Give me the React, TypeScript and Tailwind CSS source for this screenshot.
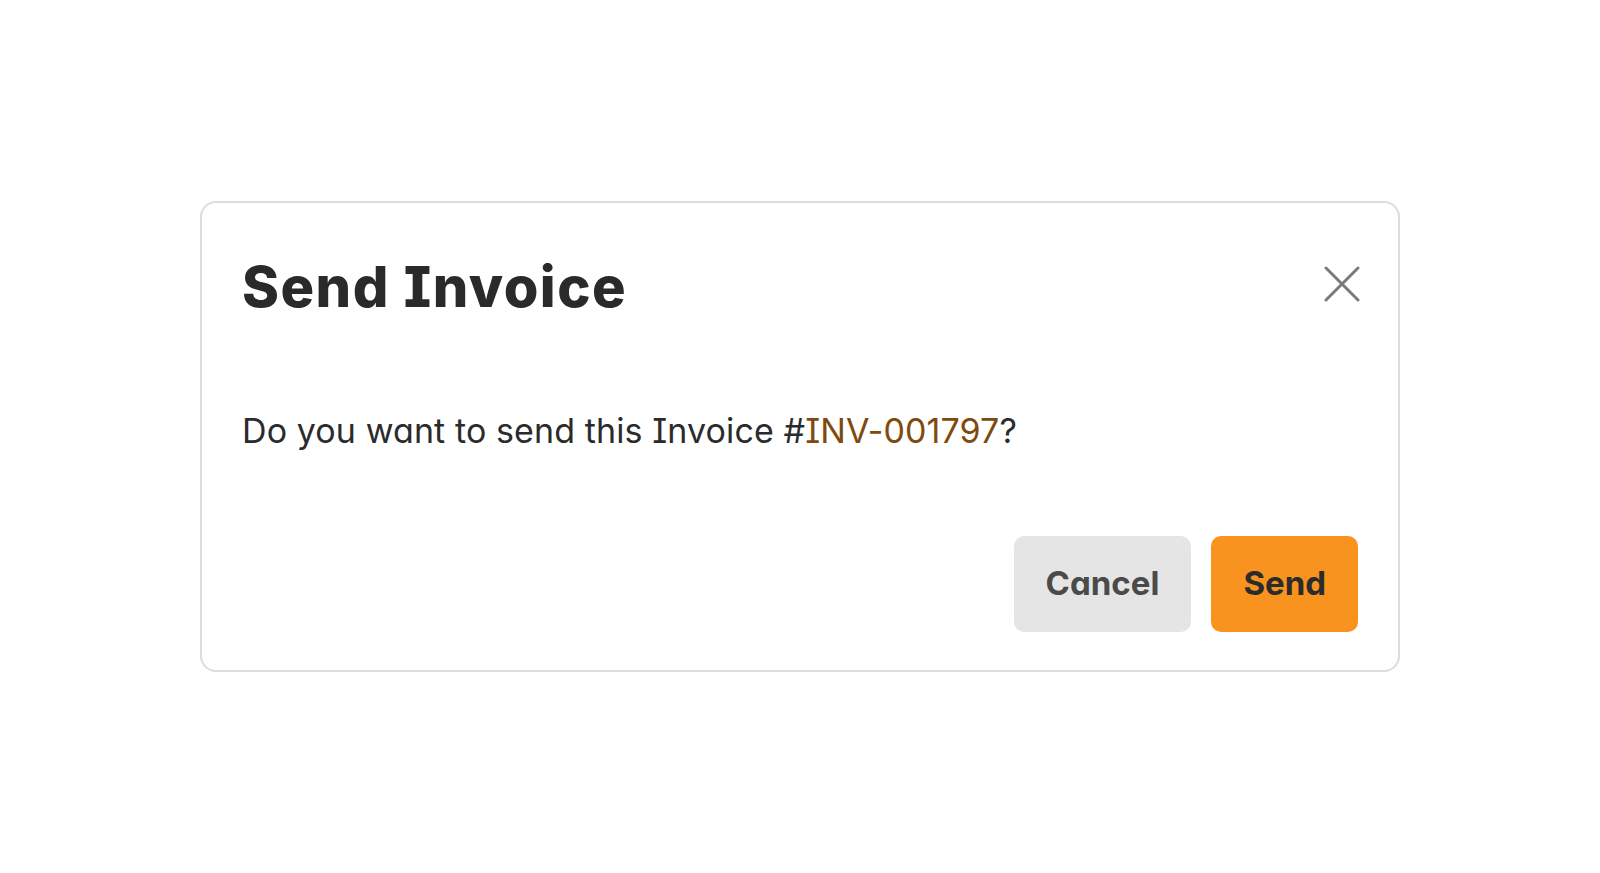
import { useState } from "react";

export default function App() {
  const [open, setOpen] = useState(true);
  const invoiceNo = "INV-001797";

  return (
    <div
      className="min-h-screen w-full bg-white flex items-center justify-center [font-feature-settings:'cv08','cv11']"
      style={{ fontFamily: "Inter, 'Noto Sans', sans-serif" }}
    >
      {open && (
        <div className="w-[1200px] rounded-[16px] border-2 border-[#dcdcdc] bg-white px-10 pt-10 pb-[38px] flex flex-col">
          <div className="flex items-start justify-between">
            <h2 className="text-[56px] leading-[88px] font-extrabold tracking-[1.5px] text-[#2a2a2a]">
              Send Invoice
            </h2>
            <button
              onClick={() => setOpen(false)}
              className="mt-[23px] -mr-[2px] text-[#7a7a7a]"
              aria-label="Close"
            >
              <svg width="36" height="36" viewBox="0 0 36 36" fill="none">
                <path
                  d="M2 2L34 34M34 2L2 34"
                  stroke="currentColor"
                  strokeWidth="3"
                  strokeLinecap="round"
                />
              </svg>
            </button>
          </div>

          <p className="mt-[80px] text-[34px] leading-[40px] tracking-[0.1px] text-[#2b2b2b]">
            Do you want to send this Invoice #
            <span className="text-[#7f4a0e]">{invoiceNo}</span>?
          </p>

          <div className="mt-[85px] flex justify-end gap-5">
            <button className="h-[96px] px-8 rounded-[10px] bg-[#e5e5e5] text-[33px] font-bold text-[#4a4a4a]">
              Cancel
            </button>
            <button className="h-[96px] px-8 rounded-[10px] bg-[#f7931e] text-[33px] font-bold text-[#2b2b2b]">
              Send
            </button>
          </div>
        </div>
      )}
    </div>
  );
}
